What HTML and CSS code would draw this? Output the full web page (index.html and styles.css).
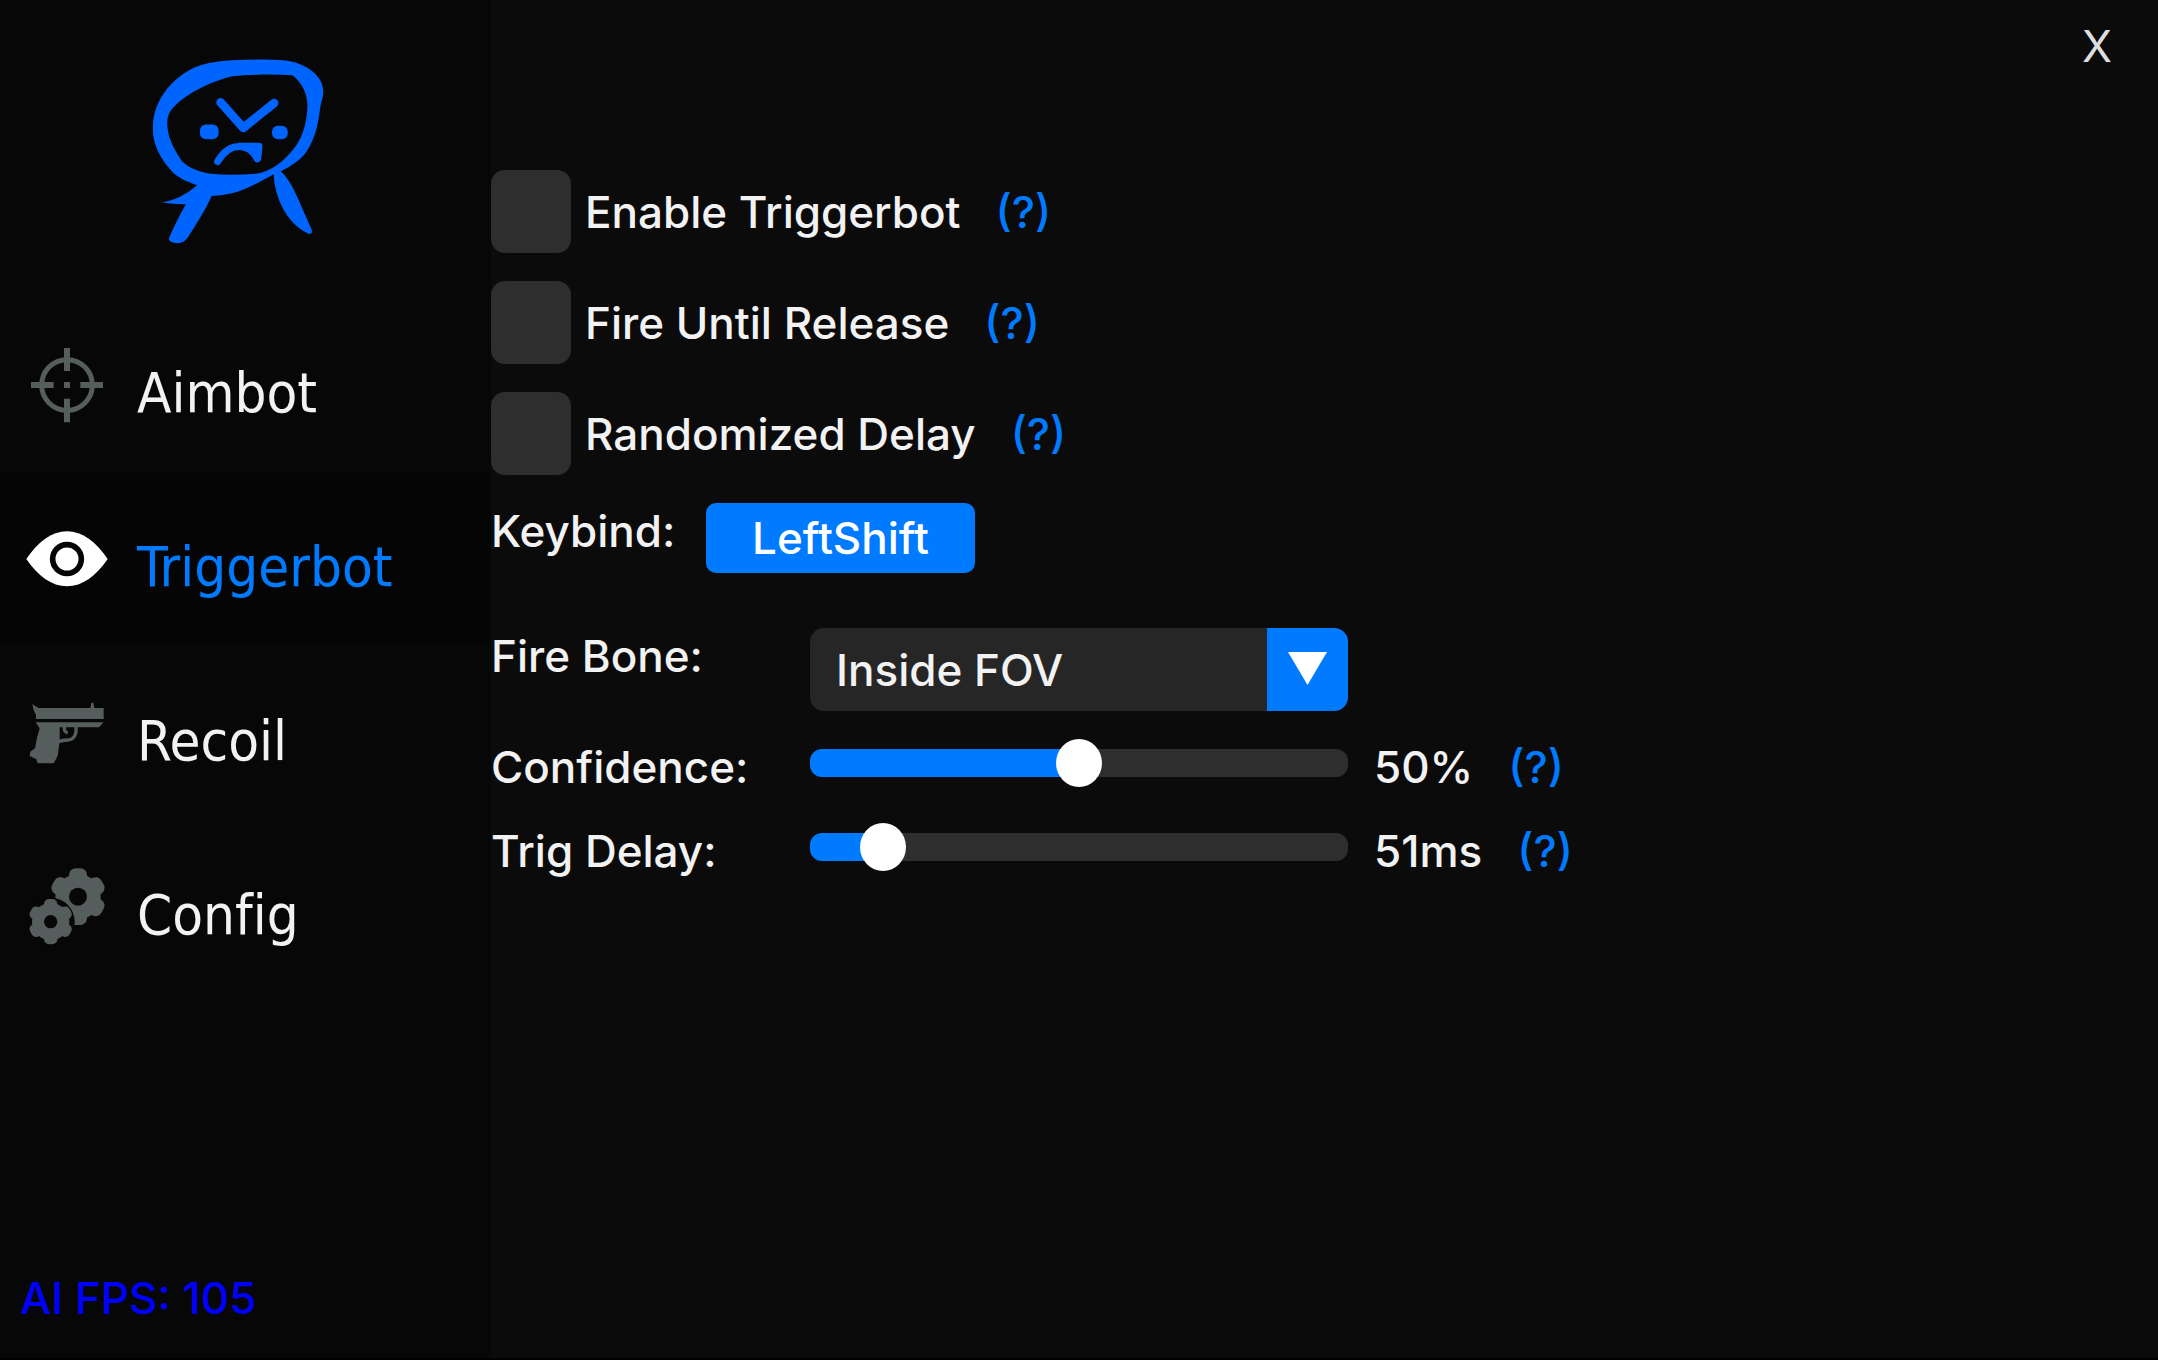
FILE: index.html
```html
<!DOCTYPE html>
<html lang="en">
<head>
    <meta charset="UTF-8">
    <meta name="viewport" content="width=device-width, initial-scale=1.0">
    <title>Triggerbot</title>
    <link rel="stylesheet" href="styles.css">
</head>
<body>
    <aside class="sidebar">
        <svg class="logo" viewBox="65 55 520 560" aria-hidden="true">
            <path fill-rule="evenodd" d="M235 70C310 58 400 58 470 63C530 72 575 110 577 150C578 175 572 180 568 205C562 265 545 315 520 345C495 372 470 384 450 395C475 415 495 460 510 495L543 570Q545 586 530 580C490 560 460 520 445 480C434 450 428 420 430 403C380 430 340 452 300 461Q270 468 243 468C225 510 195 555 172 592Q158 613 135 609Q108 605 118 588C135 550 150 520 166 493Q130 494 95 488Q150 478 200 436C165 425 135 410 120 390C85 350 66 310 67 262C68 225 78 195 95 168C130 115 180 80 235 70Z
                M305 110C370 104 430 103 485 107C515 130 530 165 530 200C528 250 515 295 490 325C460 365 420 395 375 402Q300 407 240 402C205 395 175 385 155 365C130 330 110 290 110 250Q110 222 128 203C175 155 245 125 305 110Z"/>
            <path class="stroke" d="M270 188L338 264L430 190"/>
            <path class="stroke mouth" d="M261 365C278 336 300 320 326 320C350 320 368 334 380 357M326 319H385L382 350"/>
            <rect x="208" y="254" width="56" height="44" rx="18"/>
            <rect x="424" y="258" width="47" height="40" rx="17"/>
        </svg>

        <nav class="menu">
            <button type="button" class="tab">
                <svg class="icon" viewBox="0 0 252 252" aria-hidden="true">
                    <g fill="none" stroke="currentColor">
                        <circle cx="126" cy="126" r="76" stroke-width="15"/>
                        <path stroke-width="18" d="M126 15V84M126 167V238M18 126H86M166 126H234M117 126H135"/>
                    </g>
                </svg>
                <span class="tab-name">Aimbot</span>
            </button>
            <button type="button" class="tab active">
                <svg class="icon" viewBox="0 0 252 252" aria-hidden="true">
                    <path d="M4 126C38 76 80 43 126 43S214 76 248 126C214 176 172 208 126 208S38 176 4 126Z"/>
                    <circle cx="126" cy="126" r="43" fill="none" stroke="#050505" stroke-width="17"/>
                </svg>
                <span class="tab-name">Triggerbot</span>
            </button>
            <button type="button" class="tab">
                <svg class="icon" viewBox="0 0 252 252" aria-hidden="true">
                    <path d="M22 39L40 51H196L199 35H205L208 51H236V84H33V72L26 58Z"/>
                    <path d="M32 94H236L222 109H104V150L98 195L86 217H38L34 205L14 195L16 182L30 172L36 140L44 112Z"/>
                    <path fill="none" stroke="currentColor" stroke-width="10" d="M153 106Q156 146 128 147Q108 148 98 154M119 104Q114 120 128 126"/>
                </svg>
                <span class="tab-name">Recoil</span>
            </button>
            <button type="button" class="tab">
                <svg class="icon" viewBox="0 0 252 252" aria-hidden="true">
                    <g transform="translate(159 95)">
                        <circle r="68"/>
                        <rect x="-27" y="-85" width="54" height="170" rx="20"/>
                        <rect x="-27" y="-85" width="54" height="170" rx="20" transform="rotate(60)"/>
                        <rect x="-27" y="-85" width="54" height="170" rx="20" transform="rotate(120)"/>
                        <circle r="27" fill="#070707"/>
                    </g>
                    <circle cx="77" cy="170" r="72" fill="#070707"/>
                    <g transform="translate(77 170)">
                        <circle r="56"/>
                        <rect x="-20" y="-68" width="40" height="136" rx="15"/>
                        <rect x="-20" y="-68" width="40" height="136" rx="15" transform="rotate(60)"/>
                        <rect x="-20" y="-68" width="40" height="136" rx="15" transform="rotate(120)"/>
                        <circle r="20" fill="#070707"/>
                    </g>
                </svg>
                <span class="tab-name">Config</span>
            </button>
        </nav>

        <div class="fps">AI FPS: 105</div>
    </aside>

    <main class="content">
        <header class="titlebar">
            <button type="button" class="close">X</button>
        </header>

        <form class="settings">
            <div class="check-row">
                <input type="checkbox" id="enable">
                <label for="enable">Enable Triggerbot</label>
                <span class="help">(?)</span>
            </div>
            <div class="check-row">
                <input type="checkbox" id="release">
                <label for="release">Fire Until Release</label>
                <span class="help">(?)</span>
            </div>
            <div class="check-row">
                <input type="checkbox" id="random">
                <label for="random">Randomized Delay</label>
                <span class="help">(?)</span>
            </div>

            <div class="row keybind-row">
                <label for="keybind">Keybind:</label>
                <button type="button" id="keybind" class="keybind">LeftShift</button>
            </div>

            <div class="row">
                <label for="bone">Fire Bone:</label>
                <div class="dropdown">
                    <select id="bone">
                        <option>Inside FOV</option>
                    </select>
                    <span class="arrow"></span>
                </div>
            </div>

            <div class="row">
                <label for="confidence">Confidence:</label>
                <input type="range" id="confidence" min="0" max="100" value="50" style="--fill: 50%">
                <output for="confidence">50%</output>
                <span class="help">(?)</span>
            </div>
            <div class="row">
                <label for="delay">Trig Delay:</label>
                <input type="range" id="delay" min="0" max="500" value="51" style="--fill: 10%">
                <output for="delay">51ms</output>
                <span class="help">(?)</span>
            </div>
        </form>
    </main>

<script>
    const sliders = document.querySelectorAll('input[type=range]');
    sliders.forEach(slider => {
        slider.addEventListener('input', () => {
            const unit = slider.id === 'delay' ? 'ms' : '%'
            slider.style.setProperty('--fill', slider.value / slider.max * 100 + '%')
            slider.nextElementSibling.value = slider.value + unit
        })
    })
</script>
</body>
</html>
```
FILE: styles.css
```css
*{
    box-sizing: border-box;
}
body{
    margin: 0;
    min-height: 100vh;
    display: flex;
    background-color: #0b0b0b;
    border-bottom: 2px solid #000;
    color: #f2f2f2;
    font-family: Inter, "Liberation Sans", sans-serif;
    font-size: 44px;
    font-weight: 500;
    line-height: 56px;
}
button, select{
    font: inherit;
    color: inherit;
    border: none;
    cursor: pointer;
}

/* sidebar */
.sidebar{
    flex: 0 0 491px;
    display: flex;
    flex-direction: column;
    background-color: #070707;
}
.logo{
    width: 174px;
    height: 187px;
    margin: 58px 0 53px 152px;
    fill: #0064ff;
}
.stroke{
    fill: none;
    stroke: #0064ff;
    stroke-width: 26;
    stroke-linecap: round;
    stroke-linejoin: round;
}
.mouth{
    stroke-width: 21;
}
.menu{
    display: flex;
    flex-direction: column;
}
.tab{
    display: flex;
    align-items: center;
    gap: 28px;
    height: 174px;
    padding: 0 25px;
    background: none;
    text-align: left;
}
.tab.active{
    background-color: #050505;
}
.icon{
    width: 84px;
    height: 84px;
    color: #555d5d;
    fill: currentColor;
}
.active .icon{
    color: #fff;
}
.tab-name{
    padding-top: 16px;
    font-family: "DejaVu Sans Condensed", "DejaVu Sans", sans-serif;
    font-size: 56px;
    font-variant-ligatures: none;
}
.active .tab-name{
    color: #007aff;
}
.fps{
    margin-top: auto;
    padding: 0 20px 32px;
    color: #0000ff;
}

/* content */
.content{
    flex: 1;
}
.titlebar{
    display: flex;
    justify-content: flex-end;
    height: 170px;
    padding: 18px 46px;
}
.close{
    height: 56px;
    padding: 0;
    background: none;
    color: #dedede;
    font-weight: 400;
}
.settings{
    display: flex;
    flex-direction: column;
    gap: 28px;
}
.check-row{
    display: flex;
    align-items: center;
}
.check-row input{
    appearance: none;
    width: 80px;
    height: 83px;
    margin: 0 14px 0 0;
    border-radius: 14px;
    background-color: #2e2e2e;
}
.check-row input:checked{
    background-color: #007aff;
}
.help{
    margin-left: 35px;
    color: #007aff;
}
.row{
    display: flex;
    align-items: flex-start;
}
.row label{
    width: 319px;
}
.keybind-row{
    margin-bottom: 27px;
}
.keybind-row label{
    width: 215px;
}
.keybind{
    min-width: 269px;
    height: 70px;
    border-radius: 10px;
    background-color: #007aff;
    color: #fff;
}
.dropdown{
    display: flex;
    width: 538px;
    height: 83px;
    border-radius: 14px;
    overflow: hidden;
    background-color: #262626;
}
.dropdown select{
    appearance: none;
    flex: 1;
    padding: 0 26px;
    background: none;
}
.arrow{
    width: 81px;
    padding: 24px 21px;
    background-color: #007aff;
}
.arrow::before{
    content: "";
    display: block;
    height: 33px;
    background-color: #fff;
    clip-path: polygon(0 0, 100% 0, 50% 100%);
}
input[type=range]{
    appearance: none;
    width: 538px;
    height: 48px;
    margin: 0 26px 0 0;
    background: none;
}
input[type=range]::-webkit-slider-runnable-track{
    height: 28px;
    border-radius: 12px;
    background: linear-gradient(to right, #007aff var(--fill), #2e2e2e var(--fill));
}
input[type=range]::-webkit-slider-thumb{
    appearance: none;
    width: 46px;
    height: 48px;
    margin-top: -10px;
    border-radius: 50%;
    background-color: #fff;
}
```
